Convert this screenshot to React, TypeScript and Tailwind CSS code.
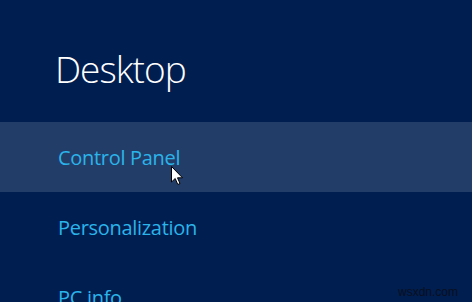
export default function App() {
  const items = ['Control Panel', 'Personalization', 'PC info'];

  return (
    <div
      className="w-[472px] h-[302px] overflow-hidden bg-[#001e50] relative"
      style={{ fontFamily: '"Open Sans", "Segoe UI", sans-serif' }}
    >
      {/* Header */}
      <div className="h-[122px] pl-[55px] pt-[45px]">
        <h1 className="text-[37px] leading-[48px] font-light text-white tracking-[-1px]">Desktop</h1>
      </div>

      {/* Items */}
      <div className="flex flex-col">
        {items.map((label, i) => (
          <div
            key={label}
            className={`h-[70px] flex items-center pl-[58px] pt-[2px] ${i === 0 ? 'bg-[#233d69]' : ''}`}
          >
            <span className="text-[20px] text-[#2ab4ea] tracking-[-0.3px]">{label}</span>
          </div>
        ))}
      </div>

      {/* Cursor */}
      <svg
        className="absolute left-[171px] top-[166px]"
        width="13"
        height="20"
        viewBox="0 0 13 20"
      >
        <path
          d="M0.5 0.5 L0.5 16 L4.2 12.5 L6.8 18.5 L9 17.5 L6.5 11.8 L11.5 11.8 Z"
          fill="#ffffff"
          stroke="#000000"
          strokeWidth="1"
          strokeLinejoin="miter"
        />
      </svg>

      {/* Watermark */}
      <span
        className="absolute left-[398px] top-[283px] text-[12px] text-[#0a0f1e]"
        style={{ fontFamily: '"Liberation Sans", Arial, sans-serif' }}
      >
        wsxdn.com
      </span>
    </div>
  );
}
